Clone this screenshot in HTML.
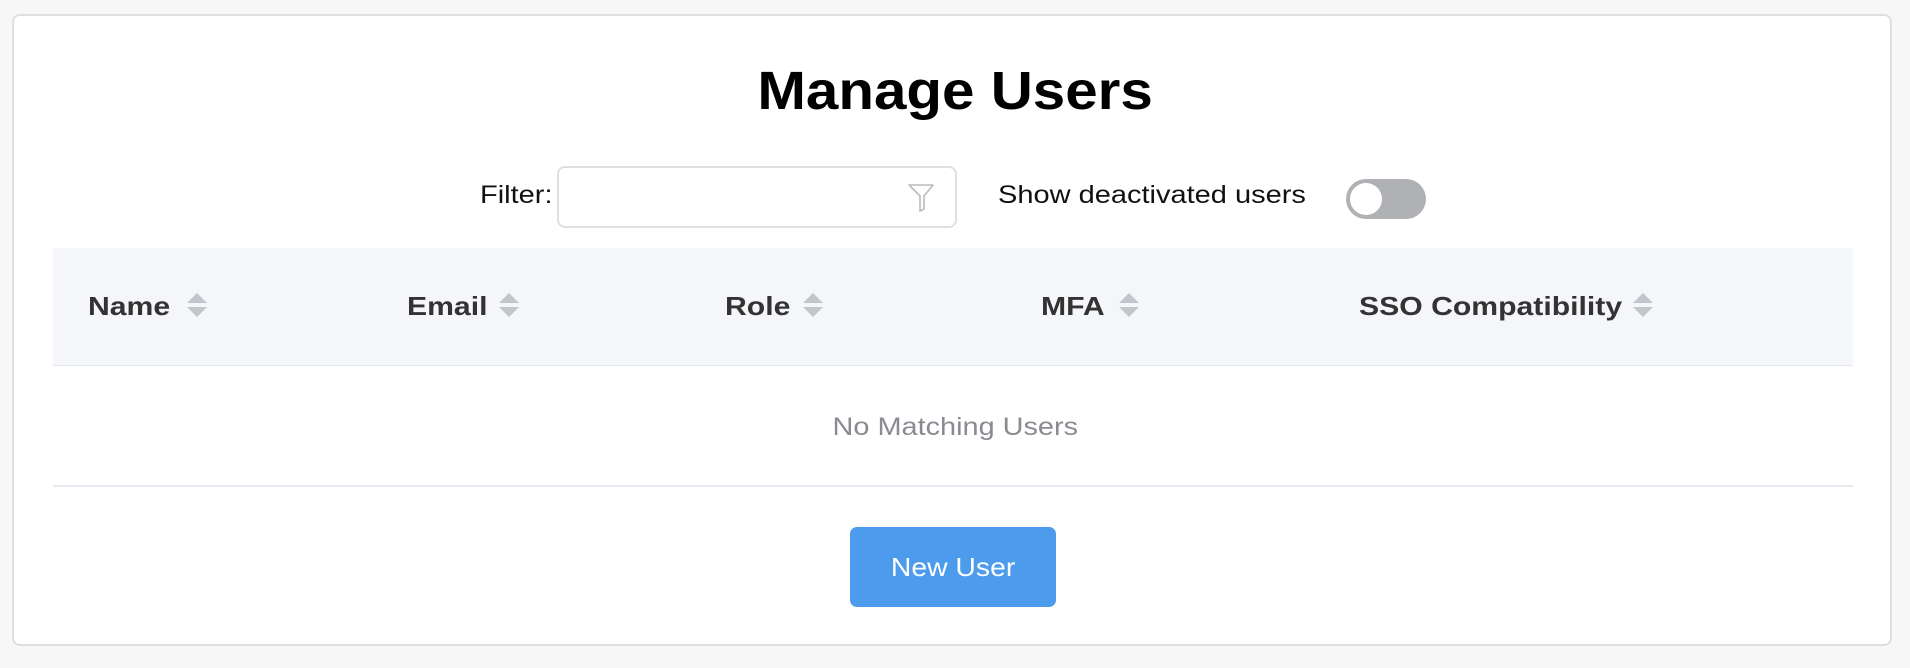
<!DOCTYPE html>
<html><head><style>
body{margin:0;width:1910px;height:668px;background:#f7f7f7;font-family:"Liberation Sans",sans-serif;position:relative;overflow:hidden}
.a{position:absolute}
.card{left:12px;top:14px;width:1880px;height:632px;background:#fff;border:2px solid #dedfe3;border-radius:8px;box-sizing:border-box}
.s{display:inline-block;transform:scaleX(1.16);transform-origin:left center}
.c{display:inline-block;transform:scaleX(1.14);transform-origin:center center}
h1{position:absolute;left:0;width:1910px;top:60px;margin:0;text-align:center;font-size:54px;font-weight:bold;color:#000}
.th{font-size:26px;font-weight:bold;color:#333;top:291px;display:flex;align-items:center}
.sort{width:22px;height:28px}
</style></head><body>
<div class="a card"></div>
<h1><span class="c" style="transform:scaleX(1.08)">Manage Users</span></h1>
<div class="a" style="left:480px;top:181px;font-size:25px;color:#111"><span class="s">Filter:</span></div>
<div class="a" style="left:557px;top:166px;width:400px;height:62px;border:2px solid #dfe0e4;border-radius:8px;box-sizing:border-box"></div>
<svg class="a" style="left:907px;top:182px" width="28" height="32" viewBox="0 0 28 32"><path d="M2 3H26L17 14V27L13 29V14Z" fill="none" stroke="#bbb" stroke-width="1.6" stroke-linejoin="round"/></svg>
<div class="a" style="left:998px;top:181px;font-size:25px;color:#111"><span class="s">Show deactivated users</span></div>
<div class="a" style="left:1346px;top:179px;width:80px;height:40px;background:#b0b1b5;border-radius:20px"></div>
<div class="a" style="left:1350px;top:183px;width:32px;height:32px;background:#fff;border-radius:50%"></div>
<div class="a" style="left:53px;top:248px;width:1800px;height:117px;background:#f5f6fa;border-bottom:1px solid #e4e6ee"></div>
<div class="a th" style="left:88px;width:140px"><span class="s">Name</span></div>
<svg class="a sort" style="left:186px;top:291px" viewBox="0 0 22 28"><path d="M11 2L21 12H1Z M11 26L21 16H1Z" fill="#c3c5cb"/></svg>
<div class="a th" style="left:407px"><span class="s">Email</span></div>
<svg class="a sort" style="left:498px;top:291px" viewBox="0 0 22 28"><path d="M11 2L21 12H1Z M11 26L21 16H1Z" fill="#c3c5cb"/></svg>
<div class="a th" style="left:725px"><span class="s">Role</span></div>
<svg class="a sort" style="left:802px;top:291px" viewBox="0 0 22 28"><path d="M11 2L21 12H1Z M11 26L21 16H1Z" fill="#c3c5cb"/></svg>
<div class="a th" style="left:1041px"><span class="s">MFA</span></div>
<svg class="a sort" style="left:1118px;top:291px" viewBox="0 0 22 28"><path d="M11 2L21 12H1Z M11 26L21 16H1Z" fill="#c3c5cb"/></svg>
<div class="a th" style="left:1359px"><span class="s">SSO Compatibility</span></div>
<svg class="a sort" style="left:1632px;top:291px" viewBox="0 0 22 28"><path d="M11 2L21 12H1Z M11 26L21 16H1Z" fill="#c3c5cb"/></svg>
<div class="a" style="left:0;width:1910px;top:413px;text-align:center;font-size:25px;color:#8a8b92"><span class="c" style="transform:scaleX(1.155)">No Matching Users</span></div>
<div class="a" style="left:53px;top:485px;width:1800px;height:2px;background:#e8eaf2"></div>
<div class="a" style="left:850px;top:527px;width:206px;height:80px;background:#4d9bec;border-radius:7px;color:#fff;font-size:26px;text-align:center;line-height:80px"><span class="c" style="transform:scaleX(1.09)">New User</span></div>
</body></html>
